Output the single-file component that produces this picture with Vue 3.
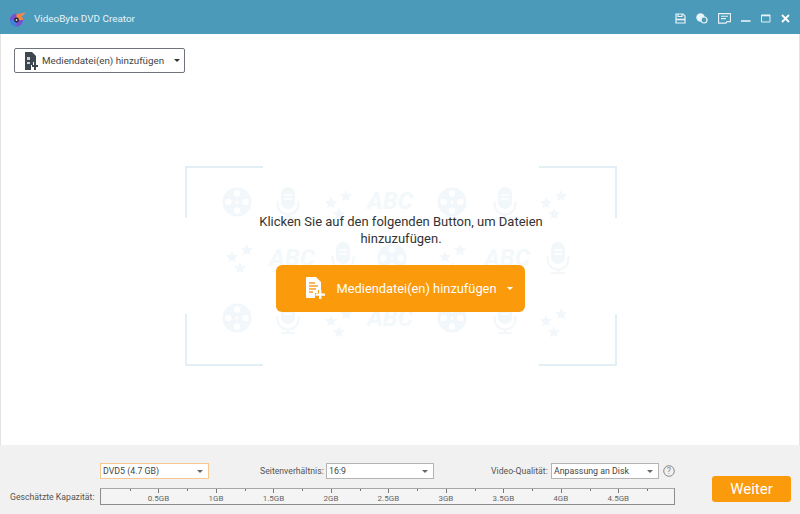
<script setup>
const ticks = Array.from({ length: 19 }, (_, i) => {
  const n = i + 1
  return {
    x: 28.74 * n,
    big: n % 2 === 0,
    label: n % 2 === 0 ? `${n * 0.25}GB` : ''
  }
})

const wm = [
  { t: 'film', x: 237, y: 202 }, { t: 'mic', x: 288, y: 203 }, { t: 'stars', x: 338, y: 207 }, { t: 'abc', x: 390, y: 201 },
  { t: 'film', x: 452, y: 202 }, { t: 'mic', x: 505, y: 203 }, { t: 'stars', x: 553, y: 207 },
  { t: 'stars', x: 239, y: 261 }, { t: 'abc', x: 292, y: 258 }, { t: 'mic', x: 343, y: 258 }, { t: 'film', x: 392, y: 258 },
  { t: 'stars', x: 452, y: 261 }, { t: 'abc', x: 507, y: 258 }, { t: 'mic', x: 558, y: 258 },
  { t: 'film', x: 237, y: 318 }, { t: 'mic', x: 288, y: 318 }, { t: 'stars', x: 338, y: 325 }, { t: 'abc', x: 390, y: 318 },
  { t: 'film', x: 452, y: 318 }, { t: 'mic', x: 505, y: 318 }, { t: 'stars', x: 553, y: 325 }
]
</script>

<template>
  <div class="app">
    <header class="titlebar">
      <svg class="logo" width="18" height="16" viewBox="0 0 18 16">
        <path d="M9 3 L17 1.5 L12 6 Z" fill="#f58a5a" />
        <circle cx="7.5" cy="9" r="6.5" fill="#7a4fd0" />
        <path d="M7.5 2.5a6.5 6.5 0 0 1 6.5 6.5H7.5z" fill="#f08a3c" />
        <path d="M1 9a6.5 6.5 0 0 0 6.5 6.5V9z" fill="#3f7fe0" />
        <circle cx="7.5" cy="9" r="2.4" fill="#1c2430" />
        <circle cx="7.5" cy="9" r="0.9" fill="#e8e8f0" />
      </svg>
      <span class="title">VideoByte DVD Creator</span>
      <div class="winbtns">
        <svg width="11" height="11" viewBox="0 0 11 11" fill="none" stroke="#e8f3f7" stroke-width="1.2">
          <path d="M1 1h7l2 2v7H1z" /><path d="M3 1v2.5h4V1" /><path d="M1 6.5h9" stroke-width="1.6" />
        </svg>
        <svg width="12" height="11" viewBox="0 0 12 11">
          <circle cx="4.5" cy="4.5" r="4.2" fill="#e8f3f7" />
          <circle cx="8" cy="7" r="3" fill="#4b9aba" stroke="#e8f3f7" stroke-width="1.2" />
        </svg>
        <svg width="13" height="11" viewBox="0 0 13 11" fill="none" stroke="#e8f3f7" stroke-width="1.1">
          <path d="M.6.6h11.8v8H9l-1 1.5H.6z" /><path d="M3 3.2h7M3 5.6h5" />
        </svg>
        <svg width="10" height="11" viewBox="0 0 10 11"><path d="M0 8h9.5" stroke="#e8f3f7" stroke-width="1.6" /></svg>
        <svg width="10" height="11" viewBox="0 0 10 11" fill="none" stroke="#e8f3f7">
          <path d="M.5 2h8.5v7H.5z" /><path d="M.5 2.6h8.5" stroke-width="1.4" />
        </svg>
        <svg width="9" height="11" viewBox="0 0 9 11"><path d="M1 2l7 7M8 2l-7 7" stroke="#fff" stroke-width="1.8" /></svg>
      </div>
    </header>

    <main class="main">
      <div class="toolbar">
        <button class="addbtn">
          <svg class="ico" width="13" height="18" viewBox="0 0 13 18">
            <path d="M0 0h7l4 4v6H8v3H6v5H0z" fill="#3e4650" />
            <path d="M2 5h3v3H2zM2 10h3v2H2z" fill="#fff" opacity=".75" />
            <path d="M9 10h2v3h2v2h-2v3H9v-3H7v-2h2z" fill="#3e4650" />
          </svg>
          <span>Mediendatei(en) hinzufügen</span>
          <i class="caret dark"></i>
        </button>
      </div>

      <svg class="watermark" width="800" height="411" viewBox="0 34 800 411">
        <defs>
          <g id="film">
            <circle r="14.5" fill="#f1f7fa" />
            <g fill="#fff">
              <circle cy="-8.5" r="3.2" /><circle cy="8.5" r="3.2" /><circle cx="-8.5" r="3.2" /><circle cx="8.5" r="3.2" />
              <circle r="1.5" />
            </g>
          </g>
          <g id="mic" fill="none" stroke="#f2f7fa" stroke-width="2">
            <rect x="-6" y="-15" width="12" height="20" rx="6" fill="#f2f7fa" />
            <path d="M-10.5 -2v3a10.5 10.5 0 0 0 21 0v-3M0 11.5v3M-7 15h14" />
            <path d="M-4 -8h8M-4 -4h8" stroke="#fff" stroke-width="1.3" />
          </g>
          <g id="stars" fill="#f1f7fa">
            <path d="M-6 -14l1.8 3.8 4.2.5-3.1 2.9.8 4.1-3.7-2-3.7 2 .8-4.1-3.1-2.9 4.2-.5z" transform="translate(-1 4)" />
            <path d="M8 -17l1.8 3.8 4.2.5-3.1 2.9.8 4.1-3.7-2-3.7 2 .8-4.1-3.1-2.9 4.2-.5z" />
            <path d="M1 1l1.8 3.8 4.2.5-3.1 2.9.8 4.1-3.7-2-3.7 2 .8-4.1-3.1-2.9 4.2-.5z" />
          </g>
        </defs>
        <template v-for="(w, i) in wm" :key="i">
          <text v-if="w.t === 'abc'" class="abc" :x="w.x" :y="w.y + 8" text-anchor="middle">ABC</text>
          <use v-else :href="`#${w.t}`" :x="w.x" :y="w.y" />
        </template>
      </svg>

      <section class="stage">
        <div class="frame">
          <i class="corner tl"></i><i class="corner tr"></i><i class="corner bl"></i><i class="corner br"></i>
          <p class="hint">Klicken Sie auf den folgenden Button, um Dateien<br />hinzuzufügen.</p>
          <button class="bigbtn">
            <svg class="ico" width="20" height="23" viewBox="0 0 20 23">
              <path d="M1 0h9l5 5v8h-3v3H9v5H1a1 1 0 0 1-1-1V1a1 1 0 0 1 1-1z" fill="#fff" />
              <path d="M3 6h6M3 9h9M3 12h7M3 15h4" stroke="#f8a02a" stroke-width="1.4" />
              <path d="M13 13h2.4v3.4H19v2.4h-3.6V22H13v-3.2H9.6v-2.4H13z" fill="#fff" />
            </svg>
            <span>Mediendatei(en) hinzufügen</span>
            <i class="caret light"></i>
          </button>
        </div>
      </section>
    </main>

    <footer class="footer">
      <div class="fields">
        <div class="sel dvd"><span>DVD5 (4.7 GB)</span><i class="caret grey"></i></div>
        <label class="lbl ratio">Seitenverhältnis:</label>
        <div class="sel"><span>16:9</span><i class="caret grey"></i></div>
        <label class="lbl qual">Video-Qualität:</label>
        <div class="sel"><span>Anpassung an Disk</span><i class="caret grey"></i></div>
        <svg class="help" width="12" height="12" viewBox="0 0 12 12">
          <circle cx="6" cy="6" r="5.3" fill="none" stroke="#8a8a8a" />
          <text x="6" y="9" text-anchor="middle" class="q">?</text>
        </svg>
      </div>
      <div class="capacity">
        <label class="lbl cap">Geschätzte Kapazität:</label>
        <div class="ruler">
          <template v-for="t in ticks" :key="t.x">
            <i class="tick" :class="{ big: t.big }" :style="{ left: t.x + 'px' }"></i>
            <span v-if="t.label" class="tlabel" :style="{ left: t.x + 'px' }">{{ t.label }}</span>
          </template>
        </div>
      </div>
      <button class="next">Weiter</button>
    </footer>
  </div>
</template>

<style scoped>
.app {
  width: 800px;
  height: 514px;
  display: flex;
  flex-direction: column;
  overflow: hidden;
  background: #fff;
  font-family: Roboto, sans-serif;
  color: #333;
  white-space: nowrap;
}
.ico { flex: none; }
.titlebar {
  height: 34px;
  flex: none;
  display: flex;
  align-items: center;
  padding: 3px 10px 0 9px;
  box-sizing: border-box;
  background: #4b9aba;
}
.logo { margin-right: 7px; }
.title {
  font-size: 9.9px;
  color: #e9f3f7;
}
.winbtns {
  margin-left: auto;
  display: flex;
  align-items: center;
  gap: 10px;
}
.main {
  flex: 1;
  position: relative;
  display: flex;
  flex-direction: column;
  border-left: 1px solid #e4e4e4;
  border-right: 1px solid #e4e4e4;
}
.toolbar {
  padding: 14px 13px 0;
  position: relative;
  z-index: 1;
}
.addbtn {
  width: 171px;
  height: 25px;
  display: flex;
  align-items: center;
  padding: 0 0 0 10px;
  gap: 4px;
  box-sizing: border-box;
  background: #fff;
  border: 1px solid #6e747a;
  border-radius: 2px;
  font: 9.8px Roboto, sans-serif;
  color: #444;
}
.caret {
  display: inline-block;
  flex: none;
  width: 0;
  height: 0;
  border-left: 3px solid transparent;
  border-right: 3px solid transparent;
  border-top: 3px solid #333;
}
.caret.dark { margin-left: 6px; }
.caret.light { border-top-color: #fff; margin-left: 10px; }
.caret.grey { border-top-color: #666; margin-left: auto; }
.watermark {
  position: absolute;
  left: -1px;
  top: 0;
}
.abc {
  font: italic 700 24px Roboto, sans-serif;
  fill: #f3f8fb;
}
.stage {
  flex: 1;
  position: relative;
}
.frame {
  position: absolute;
  left: 184px;
  top: 93px;
  width: 432px;
  height: 200px;
  display: flex;
  flex-direction: column;
  align-items: center;
}
.corner {
  position: absolute;
  width: 76px;
  height: 50px;
  border: 0 solid #e2eff4;
}
.corner.tl { left: 0; top: 0; border-width: 2px 0 0 2px; }
.corner.tr { right: 0; top: 0; border-width: 2px 2px 0 0; }
.corner.bl { left: 0; bottom: 0; border-width: 0 0 2px 2px; }
.corner.br { right: 0; bottom: 0; border-width: 0 2px 2px 0; }
.hint {
  margin: 47px 0 0;
  text-align: center;
  font-size: 13px;
  line-height: 17px;
  color: #333;
  position: relative;
}
.bigbtn {
  position: relative;
  margin: 18px 2px 0 0;
  width: 249px;
  height: 47px;
  display: flex;
  align-items: center;
  padding: 0 0 0 30px;
  box-sizing: border-box;
  border: 0;
  border-radius: 6px;
  background: #fb9a0a;
  color: #fff;
  font: 12.85px Roboto, sans-serif;
}
.bigbtn span { margin-left: 11px; }
.footer {
  height: 69px;
  flex: none;
  position: relative;
  background: #f1f1f1;
  display: flex;
  flex-direction: column;
  padding: 18px 0 0 10px;
  box-sizing: border-box;
  font-size: 8.7px;
}
.fields {
  display: flex;
  align-items: center;
  padding-left: 90px;
  height: 16px;
}
.sel {
  width: 108px;
  height: 16px;
  box-sizing: border-box;
  display: flex;
  align-items: center;
  padding: 0 5px 0 2px;
  background: #fff;
  border: 1px solid #b4b4b4;
  font-size: 8.8px;
  color: #444;
}
.sel.dvd { width: 109px; border-color: #f7c88e; }
.lbl { color: #555; font-size: 8.7px; }
.lbl.ratio { margin: 0 4px 0 51px; width: 62px; }
.lbl.qual { margin: 0 4px 0 57px; width: 56px; }
.help { margin-left: 4px; }
.q { font: 9px Roboto, sans-serif; fill: #8a8a8a; }
.capacity {
  display: flex;
  align-items: center;
  margin-top: 9px;
}
.lbl.cap { width: 90px; }
.ruler {
  position: relative;
  width: 575px;
  height: 17px;
  box-sizing: border-box;
  border: 1px solid #8c8c8c;
  border-top-color: #a8a8a8;
  background: #f4f4f4;
}
.tick {
  position: absolute;
  top: 0;
  width: 1px;
  height: 2px;
  background: #777;
}
.tick.big { height: 4px; }
.tlabel {
  position: absolute;
  top: 5px;
  transform: translateX(-50%);
  font-size: 8px;
  line-height: 10px;
  color: #666;
}
.next {
  position: absolute;
  left: 712px;
  top: 31px;
  width: 79px;
  height: 26px;
  border: 0;
  border-radius: 3px;
  background: #fb9a0a;
  color: #fff;
  font: 15px Roboto, sans-serif;
}
</style>

<style>
body { margin: 0; }
</style>
